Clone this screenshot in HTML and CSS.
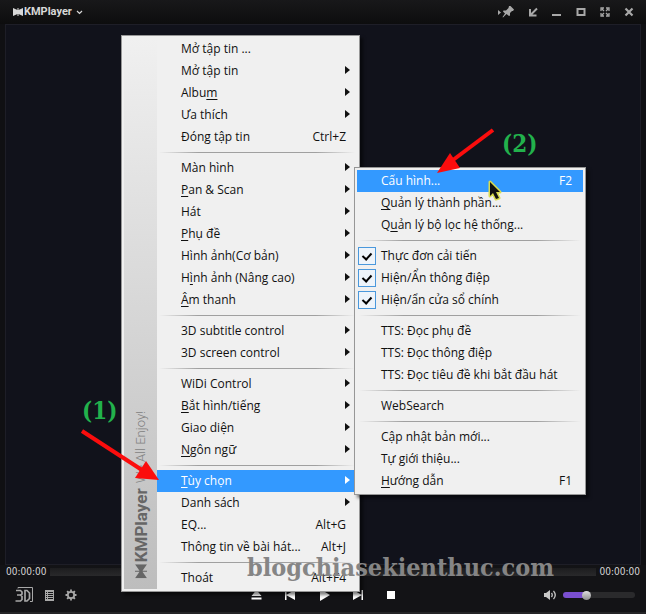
FILE: index.html
```html
<!DOCTYPE html>
<html lang="vi">
<head>
<meta charset="utf-8">
<meta name="viewport" content="width=device-width, initial-scale=1">
<title>KMPlayer</title>
<link rel="stylesheet" href="styles.css">
</head>
<body>
<div class="player">
  <header class="titlebar">
    <button class="brand" type="button">
      <svg width="10" height="8" viewBox="0 0 10 8" fill="currentColor"><path d="M0 0l4.500 2V0h1v2L10 0v8L5.500 6v2h-1V6L0 8z"/></svg>
      <span>KMPlayer</span>
      <svg class="brand-caret" width="7" height="5" viewBox="0 0 7 5" fill="none" stroke="currentColor" stroke-width="1.2"><path d="M1 1l2.500 2.500L6 1"/></svg>
    </button>
    <div class="window-buttons">
      <button type="button" aria-label="Pin"><svg width="16" height="12" viewBox="0 0 16 12" fill="currentColor"><path d="M0 4l3 2.500L0 9zM11 0h1.500L16 3.500 15 5h-1l-2 2v2.500l-1 .5-2.500-2L5 11.500l-.5-.5 2.500-3.500L5 5.500l.5-1H8L10.500 2z"/></svg></button>
      <button type="button" aria-label="Mini mode"><svg width="10" height="10" viewBox="0 0 10 10" fill="none" stroke="currentColor" stroke-width="2"><path d="M2 2v6.500h6.500M2.500 8L9 1.500"/></svg></button>
      <button type="button" aria-label="Minimize"><svg width="10" height="10" viewBox="0 0 10 10" fill="currentColor"><path d="M0 7h9v2H0z"/></svg></button>
      <button type="button" aria-label="Maximize"><svg width="10" height="10" viewBox="0 0 10 10" fill="none" stroke="currentColor" stroke-width="2"><path d="M1.500 2h7v6h-7z"/></svg></button>
      <button type="button" aria-label="Full screen"><svg width="10" height="10" viewBox="0 0 10 10" fill="none" stroke="currentColor" stroke-width="1.300"><path d="M1 4V1h3M6 1h3v3M9 6v3H6M4 9H1V6M2 2l2 2M8 2L6 4M8 8L6 6M2 8l2-2"/></svg></button>
      <button type="button" aria-label="Close"><svg width="10" height="10" viewBox="0 0 10 10" fill="none" stroke="currentColor" stroke-width="2.200"><path d="M1.500 1.500l7 7M8.500 1.500l-7 7"/></svg></button>
    </div>
  </header>

  <main class="stage"></main>

  <footer class="bottom">
    <div class="seek">
      <span class="time">00:00:00</span>
      <div class="seek-track"></div>
      <span class="time">00:00:00</span>
    </div>
    <div class="controls">
      <div class="tools">
        <button type="button" aria-label="3D"><svg width="20" height="18" viewBox="0 0 20 18" fill="none" stroke="currentColor"><path d="M4 2.500V1.500h14.500v14H16" stroke-width="1"/><path d="M2 4.500h4.500L8 6v2L6.500 9H3M6.500 9L8 10.500v3L6.500 15H1.500M11 4.500V15h2l2.500-2.500V7L13 4.500z" stroke-width="1.700"/></svg></button>
        <button type="button" aria-label="Playlist"><svg width="9" height="11" viewBox="0 0 9 11"><path d="M0 0h9v11H0z" fill="currentColor"/><path d="M1 2.500h1M3 2.500h5M1 4.500h1M3 4.500h5M1 6.500h1M3 6.500h5M1 8.500h1M3 8.500h5" stroke="#151518"/></svg></button>
        <button type="button" aria-label="Settings"><svg width="12" height="12" viewBox="0 0 12 12" fill="none" stroke="currentColor"><circle cx="6" cy="6" r="3.200" stroke-width="1.800"/><path d="M6 .5v2M6 9.500v2M.5 6h2M9.500 6h2M2.100 2.100l1.400 1.400M8.500 8.500l1.400 1.400M9.900 2.100L8.500 3.500M3.500 8.500L2.100 9.900" stroke-width="1.800"/></svg></button>
      </div>
      <div class="playback">
        <button type="button" aria-label="Open"><svg width="12" height="12" viewBox="0 0 12 12" fill="currentColor"><path d="M5.500 1l5 6H.5zM.5 8.500h10v2H.5z"/></svg></button>
        <button type="button" aria-label="Previous"><svg width="12" height="12" viewBox="0 0 12 12" fill="currentColor"><path d="M0 1h1.500v4.800L10 1v10L1.500 6.200V11H0z"/></svg></button>
        <button type="button" aria-label="Play"><svg width="12" height="12" viewBox="0 0 12 12" fill="currentColor"><path d="M1 0l10 6-10 6z"/></svg></button>
        <button type="button" aria-label="Next"><svg width="12" height="12" viewBox="0 0 12 12" fill="currentColor"><path d="M10 1H8.500v4.800L0 1v10l8.500-4.800V11H10z"/></svg></button>
        <button type="button" aria-label="Stop"><svg width="12" height="12" viewBox="0 0 12 12" fill="currentColor"><path d="M0 2h8v8H0z"/></svg></button>
      </div>
      <div class="volume">
        <button type="button" aria-label="Mute"><svg width="13" height="10" viewBox="0 0 13 10"><path d="M0 3h2l4-3v10L2 7H0z" fill="currentColor"/><path d="M7.500 3q1.500 2 0 4M9.500 .8q3.500 4.200 0 8.400" fill="none" stroke="currentColor" stroke-width="1.300"/></svg></button>
        <input class="volume-slider" type="range" min="0" max="100" value="30" aria-label="Volume">
      </div>
    </div>
  </footer>

  <nav class="menu menu-main">
    <div class="menu-gutter"><div class="gutter-text">
      <svg width="12" height="14" viewBox="0 0 12 14" fill="currentColor"><path d="M0 0h12L7.500 6.500H12v1H7.500L12 14H0l4.500-6.500H0v-1h4.500z"/></svg>
      <b>KMPlayer</b><span>We All Enjoy!</span></div></div>
    <div class="menu-list">
      <button class="item" type="button">Mở tập tin ...</button>
      <button class="item has-sub" type="button">Mở tập tin</button>
      <button class="item has-sub" type="button"><span>Albu<u>m</u></span></button>
      <button class="item has-sub" type="button">Ưa thích</button>
      <button class="item" type="button"><span>Đóng tập tin</span><kbd>Ctrl+Z</kbd></button>
      <hr>
      <button class="item has-sub" type="button">Màn hình</button>
      <button class="item has-sub" type="button"><span><u>P</u>an &amp; Scan</span></button>
      <button class="item has-sub" type="button">Hát</button>
      <button class="item has-sub" type="button"><span><u>P</u>hụ đề</span></button>
      <button class="item has-sub" type="button">Hình ảnh(Cơ bản)</button>
      <button class="item has-sub" type="button"><span>H<u>ì</u>nh ảnh (Nâng cao)</span></button>
      <button class="item has-sub" type="button"><span><u>Â</u>m thanh</span></button>
      <hr>
      <button class="item has-sub" type="button">3D subtitle control</button>
      <button class="item has-sub" type="button">3D screen control</button>
      <hr>
      <button class="item has-sub" type="button">WiDi Control</button>
      <button class="item has-sub" type="button"><span><u>B</u>ắt hình/tiếng</span></button>
      <button class="item has-sub" type="button">Giao diện</button>
      <button class="item has-sub" type="button"><span><u>N</u>gôn ngữ</span></button>
      <hr>
      <button class="item has-sub active" type="button"><span><u>T</u>ùy chọn</span></button>
      <button class="item has-sub" type="button">Danh sách</button>
      <button class="item" type="button"><span>EQ...</span><kbd>Alt+G</kbd></button>
      <button class="item" type="button"><span>Thông tin về bài hát...</span><kbd>Alt+J</kbd></button>
      <hr>
      <button class="item" type="button"><span>Thoát</span><kbd>Alt+F4</kbd></button>
    </div>
  </nav>

  <nav class="menu menu-sub">
    <div class="menu-list">
      <button class="item active" type="button"><span>Cấu hình...</span><kbd>F2</kbd></button>
      <button class="item" type="button"><span><u>Q</u>uản lý thành phần...</span></button>
      <button class="item" type="button"><span>Q<u>u</u>ản lý bộ lọc hệ thống...</span></button>
      <hr>
      <label class="item check"><input type="checkbox" checked><span>Thực đơn cải tiến</span></label>
      <label class="item check"><input type="checkbox" checked><span>Hiện/Ẩn thông điệp</span></label>
      <label class="item check"><input type="checkbox" checked><span>Hiện/ẩn cửa sổ chính</span></label>
      <hr>
      <button class="item" type="button">TTS: Đọc phụ đề</button>
      <button class="item" type="button">TTS: Đọc thông điệp</button>
      <button class="item" type="button">TTS: Đọc tiêu đề khi bắt đầu hát</button>
      <hr>
      <button class="item" type="button">WebSearch</button>
      <hr>
      <button class="item" type="button">Cập nhật bản mới...</button>
      <button class="item" type="button">Tự giới thiệu...</button>
      <button class="item" type="button"><span><u>H</u>ướng dẫn</span><kbd>F1</kbd></button>
    </div>
  </nav>

  <svg class="annotations" width="646" height="614" viewBox="0 0 646 614">
    <g fill="#fb0d0d" stroke="#fb0d0d">
      <path d="M82 431L142 470" stroke-width="4"/>
      <path d="M159 480L146 461L135 478z" stroke="none"/>
      <path d="M493 130L453 160" stroke-width="4"/>
      <path d="M437 173L450 153L460 168z" stroke="none"/>
    </g>
    <path d="M490 182v14l3-3 3 6 3-1-3-6h4z" fill="#111" stroke="#d8dc50" stroke-width="3" stroke-linejoin="round" paint-order="stroke"/>
  </svg>
  <span class="step step-one">(1)</span>
  <span class="step step-two">(2)</span>
  <span class="watermark">blogchiasekienthuc.com</span>
</div>
</body>
</html>
```
FILE: styles.css
```css
* { box-sizing: border-box; }

body {
  margin: 0;
  background: #101013;
  font-family: "Open Sans", "Noto Sans", sans-serif;
  font-size: 12px;
}

button {
  margin: 0;
  padding: 0;
  border: 0;
  background: none;
  color: inherit;
  font: inherit;
}

svg { display: block; }

.player {
  position: relative;
  display: grid;
  grid-template-rows: 24px 1fr auto;
  min-height: 100vh;
  overflow: hidden;
}

.titlebar {
  display: flex;
  align-items: center;
  justify-content: space-between;
  padding: 0 12px 0 13px;
  background: linear-gradient(#18181a, #0d0d0e);
  color: #a8a8a8;
}

.brand {
  display: flex;
  align-items: center;
  gap: 1px;
  color: #d8d8d8;
  font: bold 11px/14px Roboto, sans-serif;
}

.brand-caret { margin-left: 3px; }

.window-buttons { display: flex; align-items: center; gap: 14px; }

.stage {
  margin: 0 5px;
  background: #11121b;
  border: 1px solid #1e1e27;
}

.bottom { background: #131316; border-bottom: 2px solid #242426; }

.seek {
  display: flex;
  align-items: center;
  gap: 4px;
  height: 13px;
  padding: 0 6px;
}

.time {
  color: #d6d6d6;
  font: 10px/12px "DejaVu Sans Condensed", Roboto, sans-serif;
}

.seek-track { flex: 1; height: 8px; background: linear-gradient(#1d1d1f, #29292b); }

.controls {
  display: grid;
  grid-template-columns: 1fr auto 1fr;
  align-items: center;
  height: 34px;
  padding: 0 11px 0 14px;
}

.tools { display: flex; align-items: center; gap: 11px; color: #a8a8a8; }

.playback { display: flex; gap: 14px; color: #fff; }

.playback button { display: grid; place-items: center; width: 20px; height: 20px; }

.volume { display: flex; align-items: center; justify-content: flex-end; gap: 6px; color: #c8c8c8; }

.volume-slider {
  appearance: none;
  width: 72px;
  height: 6px;
  margin: 0;
  border-radius: 3px;
  background: linear-gradient(90deg, #7a4fd0 30%, #2a2a2c 30%);
}

.volume-slider::-webkit-slider-thumb {
  appearance: none;
  width: 9px;
  height: 9px;
  border-radius: 50%;
  background: linear-gradient(#e0e0e0, #8e8e8e);
}

.menu {
  position: absolute;
  display: flex;
  padding: 2px;
  border: 1px solid #979797;
  background: #f0f0f0;
  box-shadow: 3px 3px 3px rgba(0, 0, 0, 0.5);
  color: #111;
}

.menu-main { top: 35px; left: 121px; width: 239px; }
.menu-sub { top: 167px; left: 354px; width: 232px; }

.menu-gutter {
  display: flex;
  align-items: flex-end;
  justify-content: center;
  width: 33px;
  padding-bottom: 11px;
  background: linear-gradient(#f0f0f0, #bdbdbd);
}

.gutter-text {
  display: flex;
  align-items: center;
  writing-mode: vertical-rl;
  transform: rotate(180deg);
  color: #666;
  font: 16px/20px Roboto, sans-serif;
}

.gutter-text b { margin-top: 2px; font-size: 17px; }

.gutter-text span { margin-top: 5px; color: #808080; font-size: 13px; font-weight: 300; }

.menu-list { flex: 1; min-width: 0; }

.item {
  position: relative;
  display: flex;
  align-items: center;
  justify-content: space-between;
  width: 100%;
  height: 22px;
  padding: 0 11px 0 24px;
  line-height: 22px;
  text-align: left;
  white-space: nowrap;
}

.item u { text-underline-offset: 2px; }

.item kbd { font: inherit; }

.item.active { background: #3399ff; color: #fff; }

.has-sub { padding-right: 7px; }

.has-sub::after {
  content: "";
  margin-bottom: 2px;
  border: 4px solid transparent;
  border-left: 5px solid currentColor;
  border-right: 0;
}

.menu hr {
  height: 1px;
  margin: 4px 2px;
  border: 0;
  background: linear-gradient(90deg, transparent, #a0a0a0 20%, #a0a0a0 80%, transparent);
}

.check { justify-content: flex-start; gap: 5px; padding-left: 1px; }

.check input {
  appearance: none;
  display: grid;
  place-items: center;
  width: 18px;
  height: 18px;
  margin: 0;
  border: 1px solid #4a98dc;
  background: #eef4fa;
}

.check input::before {
  content: "";
  width: 4px;
  height: 7px;
  margin-bottom: 2px;
  border: solid #000;
  border-width: 0 2px 2px 0;
  transform: rotate(42deg);
}

.annotations { position: absolute; top: 0; left: 0; pointer-events: none; }

.step, .watermark {
  position: absolute;
  font-family: "DejaVu Serif Condensed", "DejaVu Serif", serif;
  font-weight: bold;
  white-space: nowrap;
}

.step { color: #22b14c; font-size: 24px; line-height: 26px; }
.step-one { top: 398px; left: 82px; }
.step-two { top: 131px; left: 502px; }

.watermark { top: 552px; left: 247px; color: #858585; font-size: 25px; line-height: 32px; }
```
